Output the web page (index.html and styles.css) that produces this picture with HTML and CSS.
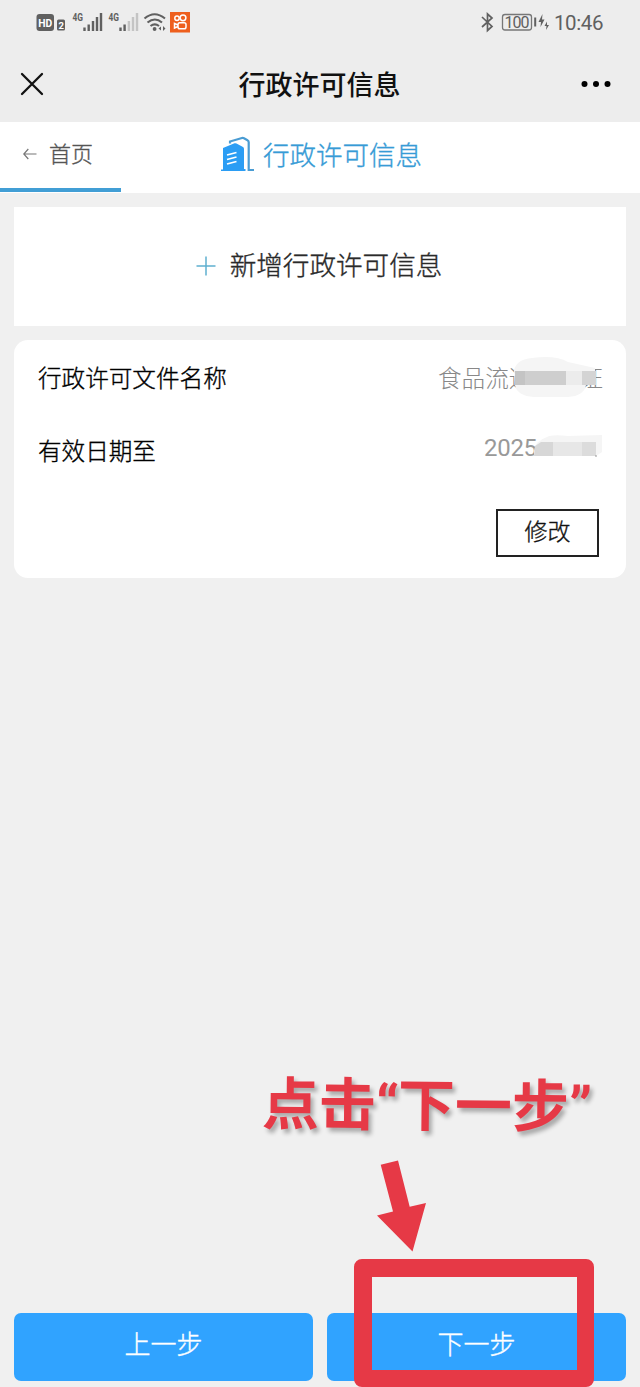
FILE: index.html
```html
<!DOCTYPE html>
<html lang="zh-CN">
<head>
<meta charset="utf-8">
<title>行政许可信息</title>
<link rel="stylesheet" href="styles.css">
</head>
<body>
<div class="screen">
  <header class="status">
    <svg class="status-left" width="160" height="26" viewBox="34 8 160 26">
      <rect x="36.500" y="14" width="17.500" height="17" rx="3" fill="#606060"/>
      <text class="hd" x="38.300" y="26.700" textLength="14" lengthAdjust="spacingAndGlyphs">HD</text>
      <rect x="57" y="19.500" width="8" height="11" rx="1.500" fill="#606060"/>
      <text class="sim" x="58.400" y="28.500">2</text>
      <text class="net" x="72.500" y="21" textLength="10.500" lengthAdjust="spacingAndGlyphs">4G</text>
      <path d="M84.500 31v-3.500M88.700 31v-6.500M93 31v-10M97 31v-14M101 31v-18" stroke="#606060" stroke-width="2.400"/>
      <text class="net" x="108.500" y="21" textLength="10.500" lengthAdjust="spacingAndGlyphs">4G</text>
      <path d="M120.500 31v-3.500M124.600 31v-6.500" stroke="#606060" stroke-width="2.400"/>
      <path d="M128.900 31v-10M133 31v-14M137 31v-18" stroke="#c4c4c4" stroke-width="2.400"/>
      <g fill="none" stroke="#606060" stroke-width="2.100">
        <path d="M144.500 18.500q10-8.500 20.500 0M147.500 22.500q7.500-6 14.500 0M150.500 26q4.300-3.300 8.500 0"/>
      </g>
      <circle cx="154.600" cy="29" r="1.900" fill="#606060"/>
      <path d="M158.500 28.500l2.500-2v4zM165.500 28.500l-2.500-2.500v5z" fill="#606060"/>
      <rect x="170" y="12" width="20" height="20.500" fill="#ee5f1d"/>
      <g fill="none" stroke="#fff" stroke-width="1.500">
        <circle cx="177" cy="18.300" r="2.200"/><circle cx="183" cy="17.800" r="2.900"/>
        <rect x="178" y="22.700" width="8" height="6" rx="1.800"/><path d="M178 25l-3.500-1.500v4.500l3.500-1.500"/>
      </g>
    </svg>
    <div class="status-right">
      <svg width="70" height="26" viewBox="480 8 70 26">
        <path d="M482 17l10 9.500-4.500 4V14l4.500 4-10 9" fill="none" stroke="#606060" stroke-width="1.700"/>
        <rect x="502.500" y="14.500" width="29" height="15.500" rx="2.500" fill="none" stroke="#777" stroke-width="1.300"/>
        <text class="battery" x="504.500" y="27.800" textLength="25">100</text>
        <path d="M535.200 17.500v9" stroke="#606060" stroke-width="2"/>
        <path d="M542.500 14l-4 8h2.500l-.5 5 4-7.500h-2.500zM547 21.500l-2.500 4.500h2l-.5 4 3-5h-2z" fill="#606060"/>
      </svg>
      <span class="clock">10:46</span>
    </div>
  </header>

  <nav class="titlebar">
    <svg width="24" height="24" viewBox="0 0 24 24"><path d="M2 2l20 20M22 2L2 22" stroke="#111" stroke-width="2.300" stroke-linecap="round"/></svg>
    <h1 class="title">行政许可信息</h1>
    <svg width="30" height="8" viewBox="0 0 30 8"><circle cx="3.500" cy="4" r="3"/><circle cx="15" cy="4" r="3"/><circle cx="26.500" cy="4" r="3"/></svg>
  </nav>

  <section class="tabs">
    <a class="home">
      <svg width="14" height="14" viewBox="0 0 14 14"><path d="M13.500 7H1M5.300 2L.8 7l4.500 5" fill="none" stroke="#777" stroke-width="1.200"/></svg>
      <span class="raise">首页</span>
    </a>
    <div class="current">
      <svg width="34" height="36" viewBox="0 0 34 36">
        <path d="M3 12L14.500 7.300q1-.4 2 .2l6.500 3.500q1 .6 1 2V33h1.500v2H1v-1.500h2z" fill="#2b9df4"/>
        <path d="M10 7.500V5.500L22 2q1-.3 2 .2l3.500 2q1.200.6 1.200 2V34H34" fill="none" stroke="#4a9cd3" stroke-width="2.200"/>
        <path d="M7 19l9.500-2.500M7 23.500l9.500-2.500M7 28l9.500-2.500" stroke="#fff" stroke-width="1.800"/>
      </svg>
      <span>行政许可信息</span>
    </div>
  </section>

  <main class="content">
    <div class="add">
      <svg width="20" height="20" viewBox="0 0 20 20"><path d="M10 .5v19M.5 10h19" stroke="#5fb0d0" stroke-width="1.500"/></svg>
      <span class="raise">新增行政许可信息</span>
    </div>
    <article class="card">
      <div class="row">
        <span class="label">行政许可文件名称</span>
        <span class="value">食品流通许可证
          <svg class="mask mask-name" width="93" height="42" viewBox="0 0 93 42">
            <path d="M2 14Q5 3 20 2Q44-1 56 6L83 12V29H74Q72 40 56 41H22Q5 40 3 29Z" fill="#f5f5f5"/>
            <path d="M3 15h51v14H3z" fill="#cecece"/><path d="M3 15h10v14H3z" fill="#c4c4c4"/><path d="M54 15h16v14H54z" fill="#ececec"/>
            <path d="M70 15h14v14H70z" fill="#d4d4d4"/>
          </svg>
        </span>
      </div>
      <div class="row row-date">
        <span class="label">有效日期至</span>
        <span class="value date">2025<svg class="mask-date" width="68" height="24" viewBox="0 0 68 24">
            <path d="M0 17Q1 7 13 3Q18 0 34 2L68 1V18L62 22H0z" fill="#f5f5f5"/>
            <path d="M1 12L7 8h12v14H0z" fill="#d7d7d7"/><path d="M19 8h29v14H19z" fill="#e7e7e7"/><path d="M48 8h14v14H48z" fill="#dcdcdc"/>
            <path d="M61 22h2" stroke="#999"/>
          </svg></span>
      </div>
      <button class="edit">修改</button>
    </article>
  </main>

  <footer class="actions">
    <button class="step">上一步</button>
    <button class="step">下一步</button>
  </footer>

  <div class="hint">点击<span class="quote">“</span>下一步<span class="quote">”</span></div>
  <svg class="arrow" width="52" height="94" viewBox="376 1159 52 94"><path d="M380.700 1164.700L398 1160.500L409.700 1206.700L426 1203L412.500 1251.500L377 1215.500L393 1211.500z" fill="#e63946"/></svg>
  <div class="frame"></div>
</div>
</body>
</html>
```

FILE: styles.css
```css
* { box-sizing: border-box; }
body { margin: 0; background: #f0f0f0; font-family: "Noto Sans CJK SC", sans-serif; font-weight: 300; }
.screen { position: relative; width: 640px; height: 1387px; overflow: hidden; display: flex; flex-direction: column; background: #f0f0f0; }
svg { display: block; flex: none; }
.status { height: 45px; padding: 8px 37px 0 34px; display: flex; justify-content: space-between; align-items: flex-start; background: #ededed; }
.status text { font-family: Roboto, sans-serif; fill: #606060; }
.status .hd { font-size: 11.500px; font-weight: 700; fill: #fff; }
.status .sim { font-size: 9.500px; font-weight: 700; fill: #fff; }
.status .net { font-size: 10.500px; font-weight: 700; }
.status .battery { font-size: 16px; font-weight: 400; }
.status-right { display: flex; gap: 4px; }
.clock { width: 49px; font: 20.500px/30px Roboto, sans-serif; color: #606060; white-space: nowrap; letter-spacing: -.4px; }
.titlebar { height: 77px; padding: 0 29px 0 20px; display: grid; grid-template-columns: 24px 1fr 30px; align-items: center; background: #ededed; }
.title { margin: 0; padding-left: 14px; font-size: 27px; line-height: 40px; font-weight: 500; text-align: center; color: #111; }
.tabs { height: 71px; display: flex; background: #fff; }
.home { width: 121px; height: 70px; padding: 0 0 3px 23px; display: flex; align-items: center; gap: 12px; border-bottom: 4px solid #419ed5; font-size: 22px; line-height: 30px; color: #555; }
.home, .current, .add, .label, .edit, .step { -webkit-text-stroke: .35px currentColor; }
.raise { padding-bottom: 4px; }
.current { height: 63px; margin-left: 99px; display: flex; align-items: center; gap: 9px; font-size: 26.500px; line-height: 36px; color: #379bd6; white-space: nowrap; }
.content { flex: 1; padding: 14px; display: flex; flex-direction: column; gap: 14px; }
.add { height: 119px; padding: 0 2px 2px 0; display: flex; align-items: center; justify-content: center; gap: 14px; background: #fff; font-size: 26.600px; color: #2a2a2a; }
.card { height: 238px; padding: 19px 27px 0 24px; border-radius: 14px; background: #fff; display: flex; flex-direction: column; }
.row { height: 36px; display: flex; justify-content: space-between; align-items: center; line-height: 36px; }
.row-date { margin-top: 37px; }
.label { font-size: 23.600px; color: #000; }
.value { position: relative; width: 161px; font-size: 23.600px; color: #888; white-space: nowrap; }
.mask { position: absolute; left: 74px; top: -3px; }
.value.date { width: 115px; margin-top: -5px; display: flex; align-items: center; font-family: Roboto, sans-serif; font-size: 24px; font-weight: 400; color: #999; letter-spacing: -.3px; }
.mask-date { margin: -3px 0 0 -3px; }
.edit { width: 103px; height: 48px; margin: 41px 0 0; padding: 0 0 7px; align-self: flex-end; border: 2px solid #222; background: #fff; font: 300 23px/36px "Noto Sans CJK SC", sans-serif; color: #111; }
.actions { height: 74px; padding: 0 14px 6px; display: grid; grid-template-columns: 1fr 1fr; gap: 14px; }
.step { padding: 0 0 9px; border: 0; border-radius: 7px; background: #30a3ff; font: 300 26px/38px "Noto Sans CJK SC", sans-serif; color: #fff; }
.hint { position: absolute; left: 262px; top: 1061px; font-size: 57px; line-height: 80px; font-weight: 700; color: #e63946; white-space: nowrap; transform: rotate(.5deg); text-shadow: 3px 4px 4px rgba(0, 0, 0, .3); }
.quote { font-family: Roboto, sans-serif; letter-spacing: -1px; }
.arrow { position: absolute; left: 376px; top: 1159px; }
.frame { position: absolute; left: 354px; top: 1259px; width: 240px; height: 128px; border: solid #e63946; border-width: 18px 17px 17px 18px; border-radius: 8px; }
```
